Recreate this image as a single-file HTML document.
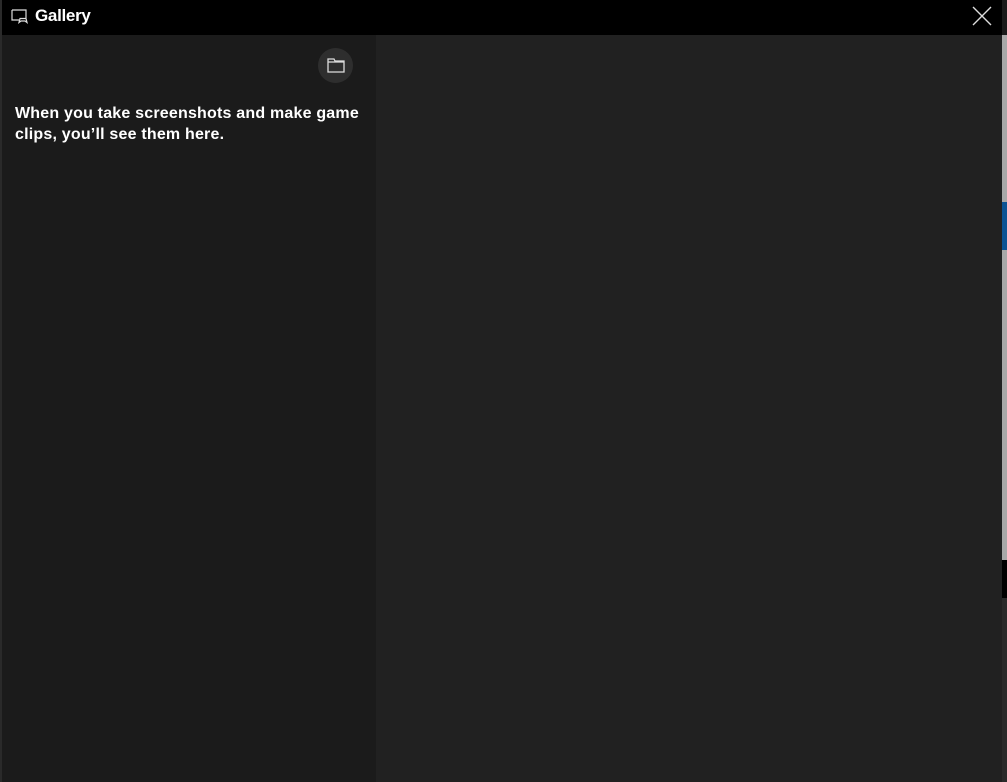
<!DOCTYPE html>
<html><head><style>
body{margin:0;width:1007px;height:782px;overflow:hidden;background:#1e1e1e;position:relative;font-family:"Liberation Sans",sans-serif}
.a{position:absolute}
</style></head><body>
<div class="a" style="left:1002px;top:0;width:5px;height:35px;background:#1a1a1a"></div>
<div class="a" style="left:1002px;top:35px;width:5px;height:167px;background:#a8a8a8"></div>
<div class="a" style="left:1002px;top:202px;width:5px;height:48px;background:#0b5394"></div>
<div class="a" style="left:1002px;top:250px;width:5px;height:310px;background:#a8a8a8"></div>
<div class="a" style="left:1002px;top:560px;width:5px;height:38px;background:#000"></div>
<div class="a" style="left:1002px;top:598px;width:5px;height:184px;background:#2a2a2a"></div>
<div class="a" style="left:0;top:0;width:2px;height:782px;background:#2a2a2a"></div>
<div class="a" style="left:2px;top:0;width:1000px;height:35px;background:#000"></div>
<svg class="a" style="left:11px;top:9px" width="17" height="15" viewBox="0 0 17 15" fill="none" stroke="#ddd" stroke-width="1.2"><path d="M1 1h14v8M1 1v10h7"/><path d="M9 9.5h6l1 4-2-1.5h-4l-2 1.5z"/></svg>
<div class="a" style="left:35px;top:6px;color:#fff;font-size:17px;font-weight:bold;letter-spacing:-0.3px">Gallery</div>
<svg class="a" style="left:972px;top:6px" width="20" height="20" viewBox="0 0 20 20" stroke="#ddd" stroke-width="1.4"><path d="M1 1L19 19M19 1L1 19"/></svg>
<div class="a" style="left:2px;top:35px;width:374px;height:747px;background:#1b1b1b"></div>
<div class="a" style="left:376px;top:35px;width:626px;height:747px;background:#212121"></div>
<div class="a" style="left:318px;top:48px;width:35px;height:35px;border-radius:50%;background:#2e2e2e"></div>
<svg class="a" style="left:327px;top:58px" width="18" height="15" viewBox="0 0 18 15" fill="none" stroke="#ddd" stroke-width="1.3"><path d="M1 1h6l1 2h9v11H1z M1 4h16"/></svg>
<div class="a" style="left:15px;top:103px;color:#fff;font-size:16px;font-weight:bold;line-height:21px;width:360px;letter-spacing:0.2px">When you take screenshots and make game clips, you’ll see them here.</div>
</body></html>
